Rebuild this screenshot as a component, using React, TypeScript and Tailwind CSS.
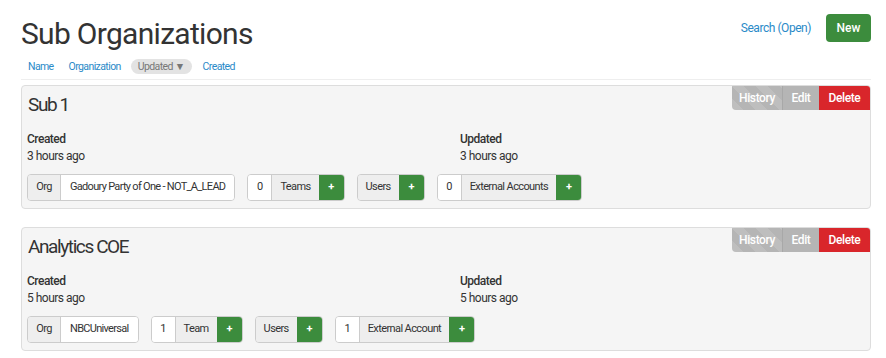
import React from "react";

type Group = { count?: string; label: string; plus?: boolean };

type SubOrg = {
  name: string;
  created: string;
  updated: string;
  org: string;
  groups: Group[];
};

const subOrgs: SubOrg[] = [
  {
    name: "Sub 1",
    created: "3 hours ago",
    updated: "3 hours ago",
    org: "Gadoury Party of One - NOT_A_LEAD",
    groups: [
      { count: "0", label: "Teams", plus: true },
      { label: "Users", plus: true },
      { count: "0", label: "External Accounts", plus: true },
    ],
  },
  {
    name: "Analytics COE",
    created: "5 hours ago",
    updated: "5 hours ago",
    org: "NBCUniversal",
    groups: [
      { count: "1", label: "Team", plus: true },
      { label: "Users", plus: true },
      { count: "1", label: "External Account", plus: true },
    ],
  },
];

function InputGroup({ group }: { group: Group }) {
  return (
    <div className="flex h-[27px] overflow-hidden rounded-[4px] border border-[#cccccc] text-[11px] tracking-[-0.6px] text-[#333]">
      {group.count ? (
        <span className="flex w-[23px] items-center justify-center bg-white">{group.count}</span>
      ) : null}
      <span
        className={
          group.count
            ? "flex items-center border-l border-[#cccccc] bg-[#eeeeee] px-[8px]"
            : "flex items-center bg-[#eeeeee] px-[8px]"
        }
      >
        {group.label}
      </span>
      {group.plus ? (
        <span className="flex w-[25px] items-center justify-center bg-[#3c8c3d] font-bold text-white">
          +
        </span>
      ) : null}
    </div>
  );
}

function Card({ org }: { org: SubOrg }) {
  return (
    <div className="rounded-[4px] border border-[#dddddd] bg-[#f5f5f5] pb-[7px] pl-[5px] pr-[5px]">
      {/* Header */}
      <div className="flex h-[40px] items-start justify-between">
        <h2 className="pl-[1px] pt-[6px] text-[19px] leading-[26px] tracking-[-1.4px] text-[#333]">{org.name}</h2>
        <div className="-mr-[5px] flex h-[24px] text-[12px] font-medium tracking-[-0.4px] text-white">
          <button className="flex w-[50px] items-center justify-center rounded-bl-[4px] bg-[#b5b5b5] bg-[linear-gradient(45deg,rgba(255,255,255,.12)_25%,transparent_25%,transparent_50%,rgba(255,255,255,.12)_50%,rgba(255,255,255,.12)_75%,transparent_75%,transparent)] bg-[length:24px_24px]">
            History
          </button>
          <button className="flex w-[37px] items-center justify-center border-l border-[#a8a8a8] bg-[#b5b5b5]">
            Edit
          </button>
          <button className="flex w-[51px] items-center justify-center rounded-tr-[3px] bg-[#d9262b]">
            Delete
          </button>
        </div>
      </div>

      {/* Dates */}
      <div className="mt-[5px] grid grid-cols-[433px_1fr] text-[12px] leading-[17px] tracking-[-0.5px] text-[#333]">
        <div>
          <p className="font-medium">Created</p>
          <p>{org.created}</p>
        </div>
        <div>
          <p className="font-medium">Updated</p>
          <p>{org.updated}</p>
        </div>
      </div>

      {/* Groups */}
      <div className="mt-[9px] flex gap-[12px]">
        <div className="flex h-[27px] overflow-hidden rounded-[4px] border border-[#cccccc] text-[11px] tracking-[-0.6px] text-[#333]">
          <span className="flex w-[33px] items-center justify-center border-r border-[#cccccc] bg-[#eeeeee]">Org</span>
          <span className="flex items-center bg-white px-[9px] tracking-[-0.7px]">{org.org}</span>
        </div>
        {org.groups.map((g) => (
          <InputGroup key={g.label} group={g} />
        ))}
      </div>
    </div>
  );
}

export default function App() {
  return (
    <div className="h-[358px] w-[886px] overflow-hidden bg-white font-['Roboto','Liberation_Sans',sans-serif]">
      <div className="ml-[21px] w-[850px]">
        {/* Title row */}
        <div className="flex items-start justify-between">
          <h1 className="pt-[14px] text-[30px] leading-[40px] tracking-[-0.7px] text-[#333]">Sub Organizations</h1>
          <div className="flex items-center gap-[15px] pt-[14px]">
            <a className="text-[12px] tracking-[-0.45px] text-[#2a8ac8]">Search (Open)</a>
            <button className="h-[28px] w-[45px] rounded-[4px] bg-[#3c8c3d] text-[12px] font-medium text-white">
              New
            </button>
          </div>
        </div>

        {/* Sort links */}
        <div className="mt-[5px] flex items-center gap-[1px] text-[10.5px] leading-[15px] tracking-[-0.6px]">
          <a className="px-[7px] text-[#2a8ac8]">Name</a>
          <a className="px-[7px] text-[#2a8ac8]">Organization</a>
          <span className="ml-[2px] rounded-full bg-[#e3e3e3] px-[7px] text-[#777]">Updated ▼</span>
          <a className="ml-[3px] px-[7px] text-[#2a8ac8]">Created</a>
        </div>

        <div className="mt-[5px] border-t border-[#eeeeee]" />

        <div className="mt-[5px] flex flex-col gap-[18px]">
          {subOrgs.map((o) => (
            <Card key={o.name} org={o} />
          ))}
        </div>
      </div>
    </div>
  );
}
